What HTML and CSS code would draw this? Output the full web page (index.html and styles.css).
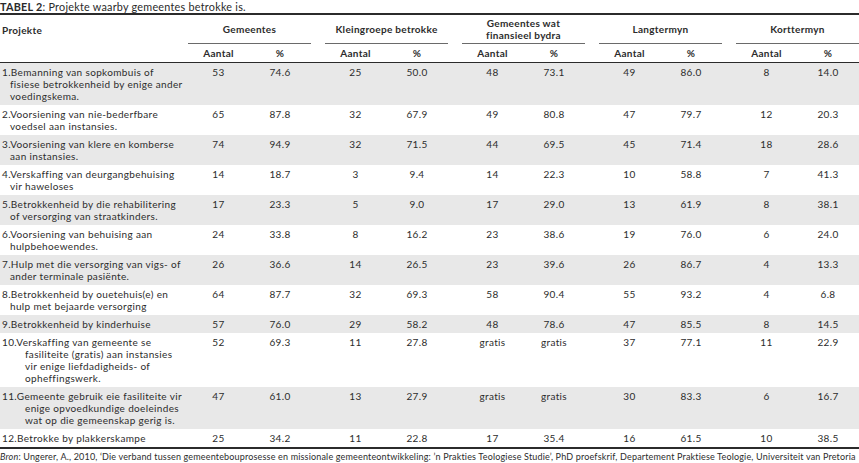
FILE: index.html
```html
<!DOCTYPE html>
<html lang="af">
<head>
<meta charset="utf-8">
<title>Tabel 2</title>
<link rel="stylesheet" href="styles.css">
</head>
<body>
<div class="caption"><b>TABEL 2</b>: Projekte waarby gemeentes betrokke is.</div>
<table class="tbl">
  <colgroup>
    <col class="c-label">
    <col class="c-sp"><col class="c-n"><col class="c-p">
    <col class="c-sp"><col class="c-n"><col class="c-p">
    <col class="c-sp"><col class="c-n"><col class="c-p">
    <col class="c-sp"><col class="c-n"><col class="c-p">
    <col class="c-sp"><col class="c-n"><col class="c-p">
  </colgroup>
  <thead>
    <tr class="h1">
      <th class="lbl">Projekte</th>
      <th></th><th colspan="2" class="grp">Gemeentes</th>
      <th></th><th colspan="2" class="grp">Kleingroepe betrokke</th>
      <th></th><th colspan="2" class="grp">Gemeentes wat<br>finansieel bydra</th>
      <th></th><th colspan="2" class="grp">Langtermyn</th>
      <th></th><th colspan="2" class="grp">Korttermyn</th>
    </tr>
    <tr class="h2">
      <th></th>
      <th></th><th>Aantal</th><th>%</th>
      <th></th><th>Aantal</th><th>%</th>
      <th></th><th>Aantal</th><th>%</th>
      <th></th><th>Aantal</th><th>%</th>
      <th></th><th>Aantal</th><th>%</th>
    </tr>
  </thead>
  <tbody>
    <tr class="odd">
      <td class="lbl"><div class="item">1.Bemanning van sopkombuis of<br>fisiese betrokkenheid by enige ander<br>voedingskema.</div></td>
      <td></td><td>53</td><td>74.6</td><td></td><td>25</td><td>50.0</td><td></td><td>48</td><td>73.1</td><td></td><td>49</td><td>86.0</td><td></td><td>8</td><td>14.0</td>
    </tr>
    <tr>
      <td class="lbl"><div class="item">2.Voorsiening van nie-bederfbare<br>voedsel aan instansies.</div></td>
      <td></td><td>65</td><td>87.8</td><td></td><td>32</td><td>67.9</td><td></td><td>49</td><td>80.8</td><td></td><td>47</td><td>79.7</td><td></td><td>12</td><td>20.3</td>
    </tr>
    <tr class="odd">
      <td class="lbl"><div class="item">3.Voorsiening van klere en komberse<br>aan instansies.</div></td>
      <td></td><td>74</td><td>94.9</td><td></td><td>32</td><td>71.5</td><td></td><td>44</td><td>69.5</td><td></td><td>45</td><td>71.4</td><td></td><td>18</td><td>28.6</td>
    </tr>
    <tr>
      <td class="lbl"><div class="item">4.Verskaffing van deurgangbehuising<br>vir haweloses</div></td>
      <td></td><td>14</td><td>18.7</td><td></td><td>3</td><td>9.4</td><td></td><td>14</td><td>22.3</td><td></td><td>10</td><td>58.8</td><td></td><td>7</td><td>41.3</td>
    </tr>
    <tr class="odd">
      <td class="lbl"><div class="item">5.Betrokkenheid by die rehabilitering<br>of versorging van straatkinders.</div></td>
      <td></td><td>17</td><td>23.3</td><td></td><td>5</td><td>9.0</td><td></td><td>17</td><td>29.0</td><td></td><td>13</td><td>61.9</td><td></td><td>8</td><td>38.1</td>
    </tr>
    <tr>
      <td class="lbl"><div class="item">6.Voorsiening van behuising aan<br>hulpbehoewendes.</div></td>
      <td></td><td>24</td><td>33.8</td><td></td><td>8</td><td>16.2</td><td></td><td>23</td><td>38.6</td><td></td><td>19</td><td>76.0</td><td></td><td>6</td><td>24.0</td>
    </tr>
    <tr class="odd">
      <td class="lbl"><div class="item">7.Hulp met die versorging van vigs- of<br>ander terminale pasiënte.</div></td>
      <td></td><td>26</td><td>36.6</td><td></td><td>14</td><td>26.5</td><td></td><td>23</td><td>39.6</td><td></td><td>26</td><td>86.7</td><td></td><td>4</td><td>13.3</td>
    </tr>
    <tr>
      <td class="lbl"><div class="item">8.Betrokkenheid by ouetehuis(e) en<br>hulp met bejaarde versorging</div></td>
      <td></td><td>64</td><td>87.7</td><td></td><td>32</td><td>69.3</td><td></td><td>58</td><td>90.4</td><td></td><td>55</td><td>93.2</td><td></td><td>4</td><td>6.8</td>
    </tr>
    <tr class="odd">
      <td class="lbl"><div class="item">9.Betrokkenheid by kinderhuise</div></td>
      <td></td><td>57</td><td>76.0</td><td></td><td>29</td><td>58.2</td><td></td><td>48</td><td>78.6</td><td></td><td>47</td><td>85.5</td><td></td><td>8</td><td>14.5</td>
    </tr>
    <tr>
      <td class="lbl"><div class="item item2">10.Verskaffing van gemeente se<br>fasiliteite (gratis) aan instansies<br>vir enige liefdadigheids- of<br>opheffingswerk.</div></td>
      <td></td><td>52</td><td>69.3</td><td></td><td>11</td><td>27.8</td><td></td><td>gratis</td><td>gratis</td><td></td><td>37</td><td>77.1</td><td></td><td>11</td><td>22.9</td>
    </tr>
    <tr class="odd">
      <td class="lbl"><div class="item item2">11.Gemeente gebruik eie fasiliteite vir<br>enige opvoedkundige doeleindes<br>wat op die gemeenskap gerig is.</div></td>
      <td></td><td>47</td><td>61.0</td><td></td><td>13</td><td>27.9</td><td></td><td>gratis</td><td>gratis</td><td></td><td>30</td><td>83.3</td><td></td><td>6</td><td>16.7</td>
    </tr>
    <tr class="last">
      <td class="lbl"><div class="item item2">12.Betrokke by plakkerskampe</div></td>
      <td></td><td>25</td><td>34.2</td><td></td><td>11</td><td>22.8</td><td></td><td>17</td><td>35.4</td><td></td><td>16</td><td>61.5</td><td></td><td>10</td><td>38.5</td>
    </tr>
  </tbody>
</table>
<div class="source"><i>Bron</i>: Ungerer, A., 2010, ‘Die verband tussen gemeentebouprosesse en missionale gemeenteontwikkeling: ’n Prakties Teologiese Studie’, PhD proefskrif, Departement Praktiese Teologie, Universiteit van Pretoria</div>
</body>
</html>
```
FILE: styles.css
```css
html, body {
  margin: 0;
  padding: 0;
  background: #ffffff;
}
body {
  width: 859px;
  height: 463px;
  overflow: hidden;
  font-family: Lato, "Open Sans", sans-serif;
  color: #2c2c2c;
  font-size: 10px;
}
.caption {
  font-size: 10.8px;
  line-height: 13px;
  height: 13px;
  letter-spacing: 0.25px;
  color: #2a2a2a;
}
.caption b {
  font-weight: 700;
}
.tbl {
  width: 859px;
  table-layout: fixed;
  border-collapse: separate;
  border-spacing: 0;
  border-top: 2px solid #2b2b2b;
  font-size: 10px;
  line-height: 12px;
  letter-spacing: 0.35px;
}
.c-label { width: 174px; }
.c-sp { width: 14px; }
.c-n { width: 61px; }
.c-p { width: 62px; }
.tbl th {
  font-weight: 700;
  text-align: center;
  padding: 0;
  vertical-align: middle;
  color: #2c2c2c;
  letter-spacing: 0.3px;
}
.h1 th {
  height: 28px;
}
.h1 th.grp {
  border-bottom: 1px solid #6a6a6a;
}
.h1 th.lbl {
  text-align: left;
  padding-left: 2px;
}
.h2 th {
  height: 18px;
  border-bottom: 1px solid #2b2b2b;
}
.tbl td {
  padding: 3px 0;
  text-align: center;
  vertical-align: top;
  white-space: nowrap;
}
.tbl td.lbl {
  text-align: left;
  padding-left: 2px;
}
.item {
  padding-left: 8px;
  text-indent: -8px;
}
.item2 {
  padding-left: 23px;
  text-indent: -23px;
}
tr.odd td {
  background: #e8e8e8;
}
tr.last td {
  border-bottom: 2px solid #2b2b2b;
}
.source {
  font-size: 9px;
  line-height: 12px;
  padding-top: 2px;
  letter-spacing: 0.17px;
  white-space: nowrap;
  color: #2c2c2c;
}
```
